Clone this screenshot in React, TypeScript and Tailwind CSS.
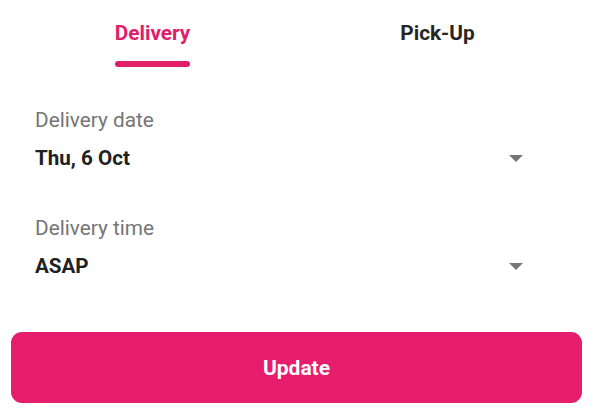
import { useState } from 'react';

const Caret = () => (
    <svg width="14" height="7" viewBox="0 0 14 7" className="shrink-0">
        <path d="M0 0 L14 0 L7 7 Z" fill="#767676" />
    </svg>
);

const Field = ({ label, value }: { label: string; value: string }) => (
    <div className="pl-[35px]">
        <div className="text-[20.8px] leading-6 text-[#757575]">{label}</div>
        <div className="mt-[14px] flex w-[488px] items-center justify-between">
            <span className="text-[20.6px] font-bold leading-6 text-[#212121]">{value}</span>
            <Caret />
        </div>
    </div>
);

const App = () => {
    const [tab, setTab] = useState<'delivery' | 'pickup'>('delivery');

    return (
        <div className="h-[410px] w-[600px] bg-white font-['Roboto',sans-serif]">
            <div className="ml-[10px] flex w-[570px] pt-[21px]">
                <button className="flex flex-1 justify-center" onClick={() => setTab('delivery')}>
                    <div className="inline-flex flex-col">
                        <span
                            className={`text-[20.8px] font-bold leading-6 ${tab === 'delivery' ? 'text-[#e01e6a]' : 'text-[#262626]'}`}
                        >
                            Delivery
                        </span>
                        {tab === 'delivery' && <div className="mt-[16px] h-[6px] w-full rounded-full bg-[#e01e6a]" />}
                    </div>
                </button>
                <button className="flex flex-1 justify-center" onClick={() => setTab('pickup')}>
                    <div className="inline-flex flex-col">
                        <span
                            className={`text-[20.8px] font-bold leading-6 ${tab === 'pickup' ? 'text-[#e01e6a]' : 'text-[#262626]'}`}
                        >
                            Pick-Up
                        </span>
                        {tab === 'pickup' && <div className="mt-[16px] h-[6px] w-full rounded-full bg-[#e01e6a]" />}
                    </div>
                </button>
            </div>

            <div className="mt-[41px]">
                <Field label="Delivery date" value="Thu, 6 Oct" />
            </div>
            <div className="mt-[46px]">
                <Field label="Delivery time" value="ASAP" />
            </div>

            <div className="ml-[11px] mt-[54px] w-[571px]">
                <button className="flex h-[71px] w-full items-center justify-center rounded-[11px] bg-[#e61c6d] pt-[2px] text-[21px] font-bold text-white">
                    Update
                </button>
            </div>
        </div>
    );
};

export default App;
